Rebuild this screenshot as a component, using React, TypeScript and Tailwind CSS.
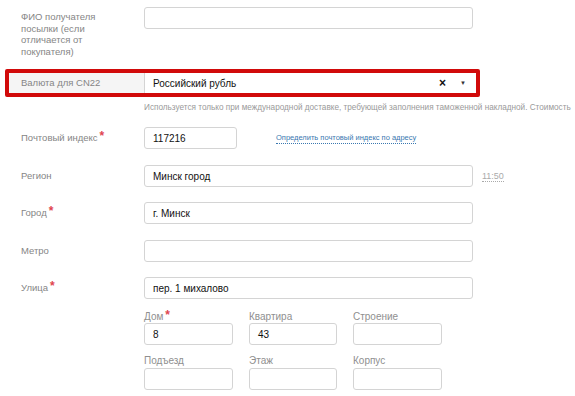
import React from "react";

const font = { fontFamily: '"Liberation Sans", Arial, sans-serif' };

const Star = () => (
  <span className="inline-block h-[10px] align-top text-[#e0454f] ml-[2px] text-[12px] font-bold leading-[10px] -mt-[1px]">
    *
  </span>
);

const Field = ({ value = "", width = "w-[329px]" }: { value?: string; width?: string }) => (
  <div
    className={`${width} h-[22px] border border-[#d4d4d4] rounded-[3px] bg-white flex items-center px-[8px] text-[10px] text-[#111]`}
  >
    {value}
  </div>
);

const Row = ({
  label,
  required,
  value,
  mt,
  children,
}: {
  label: string;
  required?: boolean;
  value?: string;
  mt: string;
  children?: React.ReactNode;
}) => (
  <div className={`flex items-center ${mt}`}>
    <div className="w-[123px] text-[9.5px] leading-[12px] text-[#858585]">
      {label}
      {required && <Star />}
    </div>
    <Field value={value} />
    {children}
  </div>
);

const SubLabel = ({ label, required }: { label: string; required?: boolean }) => (
  <div className="text-[10px] leading-[11px] text-[#8f8f8f]">
    {label}
    {required && <Star />}
  </div>
);

export default function App() {
  return (
    <div className="w-[575px] h-[396px] bg-white overflow-hidden relative" style={font}>
      <div className="pl-[21px]">
        {/* ФИО */}
        <div className="flex items-start pt-[7px]">
          <div className="w-[123px] pt-[4px] pr-[30px] text-[9.5px] leading-[11.5px] text-[#858585]">
            ФИО получателя посылки (если отличается от покупателя)
          </div>
          <Field />
        </div>
      </div>

      {/* Валюта */}
      <div className="ml-[5px] mt-[12px] w-[475px] h-[28px] border-[4px] border-[#d10a0a] rounded-[2px] flex bg-[#f5f5f5]">
        <div className="w-[135px] pl-[12px] flex items-center text-[9.5px] text-[#858585]">Валюта для CN22</div>
        <div className="flex-1 bg-white border-l border-[#d4d4d4] flex items-center pl-[8px] pr-[10px] text-[10px] text-[#111]">
          <span className="flex-1">Российский рубль</span>
          <span className="text-[12px] font-bold leading-none mr-[14px]">×</span>
          <span className="text-[6px] leading-none text-[#333]">▼</span>
        </div>
      </div>

      <div className="pl-[144px] mt-[6px] whitespace-nowrap text-[8.2px] leading-[10px] text-[#9a9a9a]">
        Используется только при международной доставке, требующей заполнения таможенной накладной. Стоимость
      </div>

      <div className="pl-[21px]">
        <div className="flex items-center mt-[14px]">
          <div className="w-[123px] text-[9.5px] leading-[12px] text-[#858585]">
            Почтовый индекс
            <Star />
          </div>
          <Field value="117216" width="w-[93px]" />
          <span className="ml-[39px] text-[7.5px] text-[#3a78b0] border-b border-dotted border-[#3a78b0] leading-[10px]">
            Определить почтовый индекс по адресу
          </span>
        </div>

        <Row label="Регион" value="Минск город" mt="mt-[16px]">
          <span className="ml-[9px] text-[9px] text-[#aaa] border-b border-dotted border-[#aaa] leading-[10px]">11:50</span>
        </Row>
        <Row label="Город" required value="г. Минск" mt="mt-[15px]" />
        <Row label="Метро" mt="mt-[16px]" />
        <Row label="Улица" required value="пер. 1 михалово" mt="mt-[15px]" />

        <div className="ml-[123px]">
          <div className="flex gap-[16px] mt-[12px]">
            <div className="w-[89px]"><SubLabel label="Дом" required /></div>
            <div className="w-[88px]"><SubLabel label="Квартира" /></div>
            <div className="w-[89px]"><SubLabel label="Строение" /></div>
          </div>
          <div className="flex gap-[16px] mt-[1px]">
            <Field value="8" width="w-[89px]" />
            <Field value="43" width="w-[88px]" />
            <Field width="w-[89px]" />
          </div>
          <div className="flex gap-[16px] mt-[10px]">
            <div className="w-[89px]"><SubLabel label="Подъезд" /></div>
            <div className="w-[88px]"><SubLabel label="Этаж" /></div>
            <div className="w-[89px]"><SubLabel label="Корпус" /></div>
          </div>
          <div className="flex gap-[16px] mt-[2px]">
            <Field width="w-[89px]" />
            <Field width="w-[88px]" />
            <Field width="w-[89px]" />
          </div>
        </div>
      </div>
    </div>
  );
}
